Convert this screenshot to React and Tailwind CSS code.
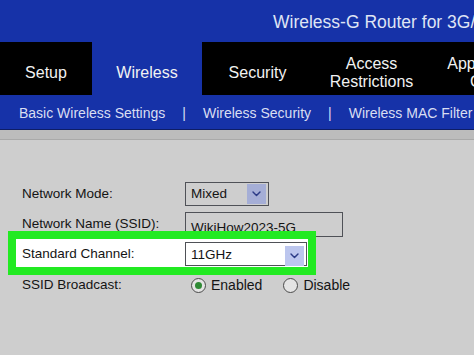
// Router admin page: "Wireless" tab with the Standard Channel row highlighted

function Chevron() {
    return (
        <svg width="11" height="8" viewBox="0 0 11 8" fill="none" stroke="#2c3b86" strokeWidth={1.4}>
            <path strokeLinecap="round" strokeLinejoin="round" d="M2 2l3.5 3.6L9 2" />
        </svg>
    );
}

function Select({ value, width, arrowBg, bg }) {
    return (
        <div className={`flex items-center h-[24px] border border-[#4f5157] ${width} ${bg}`}>
            <span className="pl-[5px] flex-1">{value}</span>
            <span className={`flex items-center justify-center w-[19px] h-[20px] mr-[2px] ${arrowBg}`}>
                <Chevron />
            </span>
        </div>
    );
}

function Radio({ checked, label }) {
    return (
        <label className="flex items-center gap-[5px]">
            <span className="flex items-center justify-center w-[15px] h-[15px] rounded-full border border-[#4a4a4a] bg-[#e4e4e4]">
                {checked && <span className="w-[7px] h-[7px] rounded-full bg-[#2f8a35]" />}
            </span>
            <span className="text-[14px]">{label}</span>
        </label>
    );
}

const TABS = [
    { label: 'Setup', width: 'w-[92px]' },
    { label: 'Wireless', width: 'w-[110px]', active: true },
    { label: 'Security', width: 'w-[111px]' },
    { label: ['Access', 'Restrictions'], width: 'w-[117px]' },
    { label: ['Applications &', 'Gaming'], width: 'w-[136px]' },
];

export default function App() {
    return (
        <div className="w-[474px] h-[355px] overflow-hidden bg-[#cecece] font-['Liberation_Sans',Arial,sans-serif]">
            {/* Title bar */}
            <div className="h-[42px] bg-[#1632a8] flex items-center pl-[273px] pt-[2px] whitespace-nowrap text-[17.5px] text-[#dfe4f4]">
                Wireless-G Router for 3G/UMTS Broadband
            </div>

            {/* Main tabs */}
            <div className="h-[53px] bg-black flex text-[16px] leading-[18px] text-[#f2f2f2] whitespace-nowrap">
                {TABS.map(({ label, width, active }, i) => (
                    <div
                        key={i}
                        className={`shrink-0 flex flex-col items-center justify-center pt-[8px] text-center ${width} ${
                            active ? 'bg-[#1632a8]' : ''
                        }`}
                    >
                        {Array.isArray(label) ? label.map((l) => <span key={l}>{l}</span>) : <span>{label}</span>}
                    </div>
                ))}
            </div>

            {/* Sub tabs */}
            <div className="h-[35px] bg-[#1632a8] border-b border-[#0e1d66] flex items-center pl-[19px] pt-[3px] gap-[17px] text-[14px] text-[#d9def2] whitespace-nowrap">
                <span>Basic Wireless Settings</span>
                <span>|</span>
                <span>Wireless Security</span>
                <span>|</span>
                <span>Wireless MAC Filter</span>
            </div>
            <div className="h-[10px] bg-[#bcbcbc] border-b border-[#a9a9a9]" />

            {/* Form */}
            <div className="pt-[39px] text-[13.5px] text-[#141414]">
                <div className="h-[30px] flex items-center pl-[22px]">
                    <span className="w-[163px]">Network Mode:</span>
                    <Select value="Mixed" width="w-[84px]" arrowBg="bg-[#a5aed6]" bg="bg-[#cecece]" />
                </div>

                <div className="h-[30px] flex items-center pl-[22px]">
                    <span className="w-[163px]">Network Name (SSID):</span>
                    <div className="h-[25px] w-[158px] border border-[#4f5157] pl-[5px] pt-[8px] leading-none overflow-hidden">
                        WikiHow2023-5G
                    </div>
                </div>

                <div className="relative h-[30px]">
                    <div className="absolute left-[8px] top-[-8px] w-[308px] h-[44px] border-[8px] border-[#22ea22] bg-white" />
                    <div className="relative h-full flex items-center pl-[22px]">
                        <span className="w-[163px]">Standard Channel:</span>
                        <Select value="11GHz" width="w-[122px]" arrowBg="bg-[#bcc6ee]" bg="bg-white pt-[3px]" />
                    </div>
                </div>

                <div className="h-[30px] flex items-center pl-[22px] pt-[2px]">
                    <span className="w-[169px]">SSID Broadcast:</span>
                    <div className="flex items-center gap-[21px]">
                        <Radio checked label="Enabled" />
                        <Radio label="Disable" />
                    </div>
                </div>
            </div>
        </div>
    );
}
